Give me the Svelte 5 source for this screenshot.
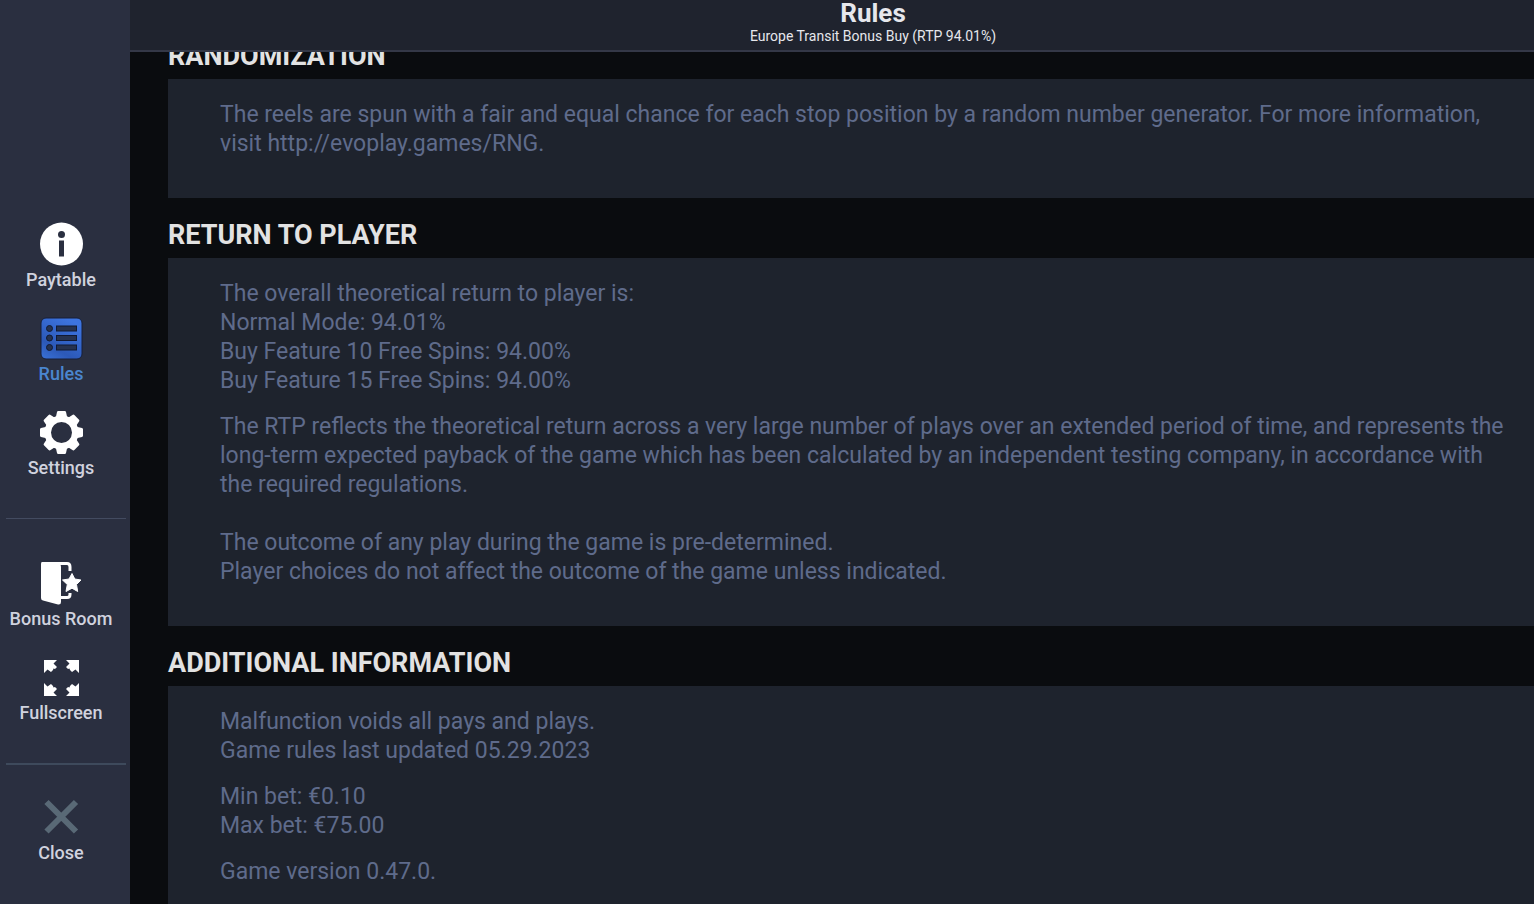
<script>
  import { onMount } from 'svelte';

  let scroller;
  let current = 'rules';

  const game = {
    name: 'Europe Transit Bonus Buy',
    rtp: '94.01%',
    version: '0.47.0'
  };

  const groups = [
    [
      { id: 'paytable', label: 'Paytable' },
      { id: 'rules', label: 'Rules' },
      { id: 'settings', label: 'Settings' }
    ],
    [
      { id: 'bonus', label: 'Bonus Room' },
      { id: 'fullscreen', label: 'Fullscreen' }
    ],
    [
      { id: 'close', label: 'Close' }
    ]
  ];

  // an empty string is a blank line inside a paragraph
  const sections = [
    {
      title: 'RANDOMIZATION',
      paragraphs: [
        ['The reels are spun with a fair and equal chance for each stop position by a random number generator. For more information, visit http://evoplay.games/RNG.']
      ]
    },
    {
      title: 'RETURN TO PLAYER',
      paragraphs: [
        [
          'The overall theoretical return to player is:',
          'Normal Mode: 94.01%',
          'Buy Feature 10 Free Spins: 94.00%',
          'Buy Feature 15 Free Spins: 94.00%'
        ],
        [
          'The RTP reflects the theoretical return across a very large number of plays over an extended period of time, and represents the long-term expected payback of the game which has been calculated by an independent testing company, in accordance with the required regulations.',
          '',
          'The outcome of any play during the game is pre-determined.',
          'Player choices do not affect the outcome of the game unless indicated.'
        ]
      ]
    },
    {
      title: 'ADDITIONAL INFORMATION',
      paragraphs: [
        ['Malfunction voids all pays and plays.', 'Game rules last updated 05.29.2023'],
        ['Min bet: €0.10', 'Max bet: €75.00'],
        [`Game version ${game.version}.`]
      ]
    }
  ];

  // the arrow is drawn once and mirrored into the other corners
  const corners = [
    'matrix(1 0 0 1 0 0)',
    'matrix(-1 0 0 1 45 0)',
    'matrix(1 0 0 -1 0 46)',
    'matrix(-1 0 0 -1 45 46)'
  ];

  onMount(() => {
    scroller.scrollTop = 33;
  });
</script>

<div class="menu">
  <nav class="sidebar">
    {#each groups as group}
      <div class="group">
        {#each group as item}
          <button class="item" class:active={item.id == current} on:click={() => (current = item.id)}>
            <svg width="44" height="44" viewBox="0 0 44 44" aria-hidden="true">
              {#if item.id == 'paytable'}
                <circle cx="22.5" cy="22" r="21.5" fill="#fff" />
                <circle cx="22.5" cy="12.5" r="3.5" fill="#2a2f40" />
                <rect x="20" y="18.5" width="5" height="16" fill="#2a2f40" />
              {:else if item.id == 'rules'}
                <defs>
                  <linearGradient id="blue" x1="0" y1="1" x2="0.6" y2="0">
                    <stop offset="0" stop-color="#3a72d8" />
                    <stop offset="0.35" stop-color="#2c59b8" />
                    <stop offset="1" stop-color="#3d74e0" />
                  </linearGradient>
                </defs>
                <rect x="2" y="2" width="41" height="41" rx="5" fill="url(#blue)" stroke="#171f38" />
                {#each [12.5, 22, 31.5] as y}
                  <circle cx="10.5" cy={y} r="3" fill="#26324f" stroke="#111a35" />
                  <rect x="17.5" y={y - 2.5} width="20" height="5" fill="#26324f" stroke="#111a35" />
                {/each}
              {:else if item.id == 'settings'}
                <g fill="#fff">
                  {#each [0, 45, 90, 135, 180, 225, 270, 315] as angle}
                    <path d="M14.5 9 17 6.5 18 2Q18.2 1 19.2 1H25.8Q26.8 1 27 2L28 6.5 30.5 9Z" transform="rotate({angle} 22.5 22.5)" />
                  {/each}
                  <path fill-rule="evenodd" d="M22.5 5.5a17 17 0 1 0 0 34 17 17 0 0 0 0-34ZM22.5 12a10.5 10.5 0 1 1 0 21 10.5 10.5 0 0 1 0-21Z" />
                </g>
              {:else if item.id == 'bonus'}
                <path d="M3 1H17L21 3Q22 4 22 6V41Q22 44 19 43.5L4 39.5Q2 39 2 37V3Q2 1 3 1Z" fill="#fff" />
                <path d="M16 2.5H28Q31 2.5 31 6V10M22 36.5H28Q31 36.5 31 33.5V32" fill="none" stroke="#fff" stroke-width="3" />
                <path d="M33 12.5 35.8 18 42 19 37.5 23.5 38.7 30.5 33 27.2 27 30.5 28.3 23.5 23.5 19 30 18Z" fill="#fff" stroke="#fff" stroke-linejoin="round" />
              {:else if item.id == 'fullscreen'}
                {#each corners as corner}
                  <path d="M5 5H18L14.5 8.5 18 12 16 14 14.5 13.5 14 15 12 17 8.5 14.5 5 18Z" fill="#fff" transform={corner} />
                {/each}
              {:else}
                <path d="M7.5 7 37 36.5M37 7 7.5 36.5" stroke="#596976" stroke-width="6" />
              {/if}
            </svg>
            <span>{item.label}</span>
          </button>
        {/each}
      </div>
    {/each}
  </nav>

  <div class="page">
    <header>
      <h1>Rules</h1>
      <p>{game.name} (RTP {game.rtp})</p>
    </header>

    <main bind:this={scroller}>
      {#each sections as section}
        <section>
          <h2>{section.title}</h2>
          <div class="panel">
            {#each section.paragraphs as lines}
              <p>
                {#each lines as line, i}
                  {#if i > 0}<br>{/if}{line}
                {/each}
              </p>
            {/each}
          </div>
        </section>
      {/each}
    </main>
  </div>
</div>

<style>
  :global(body) {
    background: #0a0c0f;
  }

  .menu {
    display: flex;
    height: 100vh;
    font-family: Roboto, "Liberation Sans", sans-serif;
  }

  .sidebar {
    display: flex;
    flex-direction: column;
    justify-content: flex-end;
    flex: 0 0 130px;
    box-sizing: border-box;
    padding: 0 4px 37px 6px;
    background: #2a2f40;
  }

  .group {
    display: flex;
    flex-direction: column;
    gap: 22px;
    padding: 42px 10px 36px 0;
    border-bottom: 1px solid #434b60;
  }
  .group:nth-child(2) {
    border-bottom: 2px solid #3e4a5c;
  }
  .group:last-child {
    padding: 30px 10px 0 0;
    border-bottom: 0;
  }

  .item {
    display: flex;
    flex-direction: column;
    align-items: center;
    padding: 0;
    border: 0;
    background: none;
    color: #d0d2de;
    font-family: inherit;
    font-size: 18px;
    font-weight: 500;
    line-height: 28px;
    white-space: nowrap;
    cursor: pointer;
  }
  .item.active {
    color: #4a86cf;
  }

  .page {
    display: flex;
    flex-direction: column;
    flex: 1;
    min-width: 0;
  }

  header {
    padding: 0 48px 4px 130px;
    border-bottom: 2px solid #343847;
    background: #1f232e;
    color: #e6e7ec;
    text-align: center;
  }
  h1 {
    margin: 0;
    font-size: 26px;
    font-weight: 700;
    line-height: 26px;
  }
  header p {
    margin: 0;
    font-size: 14px;
    line-height: 20px;
  }

  main {
    flex: 1;
    min-height: 0;
    padding-left: 38px;
    overflow-y: auto;
    scrollbar-width: none;
  }

  h2 {
    margin: 0;
    padding: 21px 0 7px;
    color: #e2e2e2;
    font-size: 27px;
    font-weight: 700;
    line-height: 32px;
  }

  .panel {
    padding: 21px 16px 23px 52px;
    background: #1e232d;
    color: #5f6b8b;
    font-size: 23px;
    line-height: 29px;
  }
  .panel p {
    margin: 0 0 17px;
  }
</style>
